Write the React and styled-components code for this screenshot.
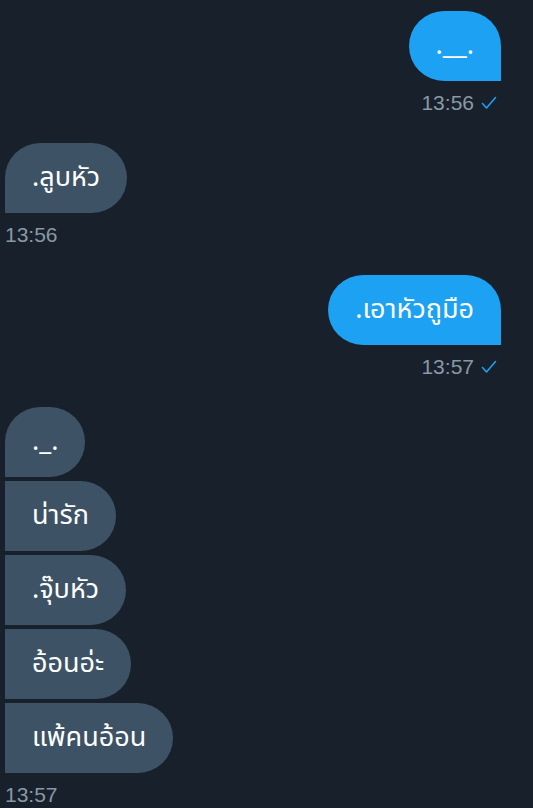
import React from 'react';
import styled, { createGlobalStyle } from 'styled-components';

const GlobalStyle = createGlobalStyle`
  html, body {
    margin: 0;
    padding: 0;
    background: #18212b;
  }
  body {
    font-family: "Noto Sans Thai", "Noto Sans", "Liberation Sans", sans-serif;
  }
`;

const Thread = styled.div`
  width: 533px;
  height: 808px;
  box-sizing: border-box;
  background: #18212b;
  padding: 11px 32px 0 5px;
  display: flex;
  flex-direction: column;
  overflow: hidden;
`;

const Group = styled.div`
  display: flex;
  flex-direction: column;
  align-items: ${({ mine }) => (mine ? 'flex-end' : 'flex-start')};
  gap: 4px;
  & + & {
    margin-top: 29px;
  }
`;

const Bubble = styled.div`
  height: 70px;
  box-sizing: border-box;
  padding: 0 27px 2px;
  display: flex;
  align-items: center;
  font-size: 27px;
  color: #ffffff;
  white-space: nowrap;
  background: ${({ mine }) => (mine ? '#1da1f2' : '#3d5264')};
  border-radius: ${({ mine, first }) =>
    mine ? '35px 35px 0 35px' : first ? '35px 35px 35px 0' : '0 35px 35px 0'};
`;

const Meta = styled.div`
  display: flex;
  align-items: center;
  gap: 7px;
  height: 22px;
  margin-top: 7px;
  padding-right: ${({ mine }) => (mine ? '4px' : '0')};
  font-family: "Liberation Sans", Arial, sans-serif;
  font-size: 21px;
  color: #8899a6;
`;

function Check() {
  return (
    <svg width="16" height="14" viewBox="0 0 16 14">
      <polyline
        points="1.5,7.5 5.5,12 14.5,1.5"
        fill="none"
        stroke="#1da1f2"
        strokeWidth="1.6"
        strokeLinecap="round"
        strokeLinejoin="round"
      />
    </svg>
  );
}

const thread = [
  { mine: true, texts: ['.__.'], time: '13:56' },
  { mine: false, texts: ['.ลูบหัว'], time: '13:56' },
  { mine: true, texts: ['.เอาหัวถูมือ'], time: '13:57' },
  { mine: false, texts: ['._.', 'น่ารัก', '.จุ๊บหัว', 'อ้อนอ่ะ', 'แพ้คนอ้อน'], time: '13:57' },
];

export default function App() {
  return (
    <>
      <GlobalStyle />
      <Thread>
        {thread.map((g, i) => (
          <Group key={i} mine={g.mine}>
            {g.texts.map((t, j) => (
              <Bubble key={j} mine={g.mine} first={j === 0}>
                {t}
              </Bubble>
            ))}
            <Meta mine={g.mine}>
              {g.time}
              {g.mine && <Check />}
            </Meta>
          </Group>
        ))}
      </Thread>
    </>
  );
}
